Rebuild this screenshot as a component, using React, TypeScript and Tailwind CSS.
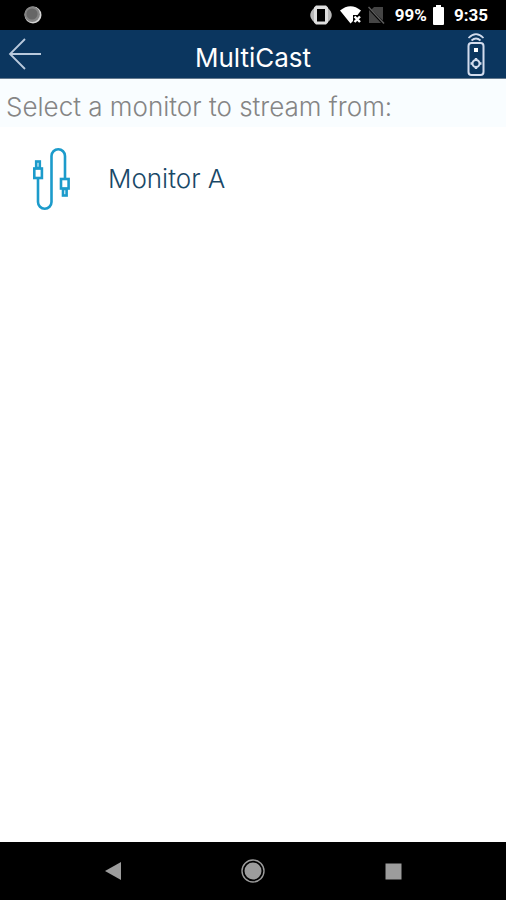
function StatusBar() {
  return (
    <div className="flex h-[30px] shrink-0 items-center bg-black pr-[18px] pl-6 font-['Roboto',sans-serif] text-white">
      <svg width="18" height="18" viewBox="0 0 18 18" aria-hidden="true">
        <circle cx="9" cy="9" r="8.5" fill="#d4d4d4" />
        <circle cx="8.2" cy="8.2" r="7.7" fill="#858585" />
        <circle cx="8" cy="8" r="5.6" fill="#666666" />
      </svg>
      <div className="ml-auto flex items-center">
        <svg width="22" height="20" viewBox="0 0 22 20" aria-hidden="true">
          <path d="M4.5 2.5Q-4 10 4.5 17.5ZM17.5 2.5Q26 10 17.5 17.5Z" fill="#b8b8b8" />
          <path
            fillRule="evenodd"
            d="M6 .5H16L18 2.5V17.5L16 19.5H6L4 17.5V2.5ZM7 4V16.5H15V4Z"
            fill="#dedede"
          />
        </svg>
        <svg className="ml-2" width="22" height="18" viewBox="0 0 22 18" aria-hidden="true">
          <path d="M0 4.5Q10.5-4 21 4.5L17.5 9H13V15L10.5 17.5Z" fill="#fff" />
          <path d="M14.5 10.5L20 16M20 10.5L14.5 16" stroke="#fff" strokeWidth="2.4" />
        </svg>
        <svg className="ml-1.5" width="17" height="18" viewBox="0 0 17 18" aria-hidden="true">
          <path d="M6 1H15V14.5L3.5 3.5Z" fill="#454545" />
          <path d="M1 4L13 17H1Z" fill="#454545" />
          <path d="M.5 1L16 17.5" stroke="#5c5c5c" strokeWidth="1.5" />
        </svg>
        <span className="ml-2.5 text-[17px] leading-5 font-bold">99%</span>
        <svg className="ml-1.5" width="11" height="20" viewBox="0 0 11 20" aria-hidden="true">
          <path d="M3 0H8V2H10Q11 2 11 3V19Q11 20 10 20H1Q0 20 0 19V3Q0 2 1 2H3Z" fill="#fff" />
        </svg>
        <span className="ml-2.5 text-[17px] leading-5 font-bold">9:35</span>
      </div>
    </div>
  );
}

function TitleBar() {
  return (
    <header className="grid h-[49px] shrink-0 grid-cols-[1fr_auto_1fr] items-center border-b border-[#64798e] bg-[#0b365f] px-2">
      <button type="button" aria-label="Back" className="justify-self-start">
        <svg width="34" height="34" viewBox="0 0 34 34" fill="none" stroke="#b9c9dc" strokeWidth="1.8">
          <path d="M17 2L2 17L17 32M2 17H33" />
        </svg>
      </button>
      <h1 className="pt-2 text-[26px] leading-8 font-normal text-white">MultiCast</h1>
      <button type="button" aria-label="Remote control" className="mr-3 justify-self-end">
        <svg width="20" height="44" viewBox="0 0 20 44" fill="none" stroke="#d3dced" strokeWidth="2">
          <path d="M2.5 6Q10-1.5 17.5 6M5.5 8.5Q10 4.5 14.5 8.5" strokeWidth="1.7" />
          <rect x="2.5" y="11" width="15" height="32" rx="3" />
          <rect x="8" y="16" width="4" height="4" fill="#fff" stroke="none" />
          <circle cx="10" cy="31.5" r="3.5" />
          <path d="M4.5 31.5H7M13 31.5H15.5M10 26V28.5M10 34.5V37" strokeWidth="2.4" />
        </svg>
      </button>
    </header>
  );
}

function CableIcon() {
  return (
    <svg width="40" height="64" viewBox="0 0 40 64" fill="none" stroke="#1c9bcb" strokeWidth="2.6" aria-hidden="true">
      <path d="M6 32V55A6.75 6.75 0 0 0 19.5 55V9A6.75 6.75 0 0 1 33 9V31" />
      <rect x="2.3" y="21.5" width="7.6" height="9.5" />
      <rect x="4.2" y="14.5" width="3.6" height="6.5" />
      <rect x="29" y="32" width="7.6" height="9.5" />
      <rect x="31" y="42" width="3.6" height="6.5" />
    </svg>
  );
}

function NavigationBar() {
  return (
    <nav className="grid h-[58px] shrink-0 grid-cols-[1fr_auto_1fr] items-center bg-black px-[104px]">
      <button type="button" aria-label="Back" className="justify-self-start">
        <svg width="18" height="20" viewBox="0 0 18 20">
          <path d="M1 10L17 1V19Z" fill="#9c9c9c" />
        </svg>
      </button>
      <button type="button" aria-label="Home">
        <svg width="24" height="24" viewBox="0 0 24 24">
          <circle cx="12" cy="12" r="11" fill="none" stroke="#9c9c9c" strokeWidth="1.4" />
          <circle cx="12" cy="12" r="8.5" fill="#9c9c9c" />
        </svg>
      </button>
      <button type="button" aria-label="Overview" className="justify-self-end">
        <svg width="17" height="17" viewBox="0 0 17 17">
          <rect width="16" height="16" x=".5" y=".5" fill="#9c9c9c" />
        </svg>
      </button>
    </nav>
  );
}

export default function App() {
  return (
    <div className="flex min-h-screen flex-col bg-white font-['Inter','Roboto',sans-serif] font-light">
      <StatusBar />
      <TitleBar />
      <main className="flex-1">
        <h2 className="bg-[#f9fdff] px-1.5 pt-3 pb-1 text-[26px] leading-8 text-[#858585]">
          Select a monitor to stream from:
        </h2>
        <ul>
          <li>
            <button type="button" className="flex w-full items-center gap-9 px-8 py-5 text-left">
              <CableIcon />
              <span className="text-[26px] leading-8 text-[#194867]">Monitor A</span>
            </button>
          </li>
        </ul>
      </main>
      <NavigationBar />
    </div>
  );
}
